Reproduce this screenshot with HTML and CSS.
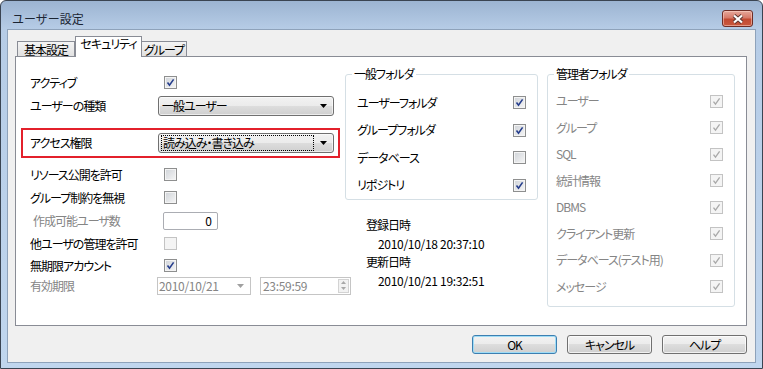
FILE: index.html
```html
<!DOCTYPE html>
<html lang="ja">
<head>
    <meta charset="UTF-8">
    <meta name="viewport" content="width=device-width, initial-scale=1.0">
    <title>ユーザー設定</title>
    <link rel="stylesheet" href="styles.css">
</head>
<body>
<div class="window">
    <div class="titlebar">
        <span class="title">ユーザー設定</span>
        <span class="close">
            <svg width="14" height="10" viewBox="0 0 14 10"><path class="x-shadow" d="M3 1.5 11 8.5M11 1.5 3 8.5"/><path class="x-mark" d="M3 1.5 11 8.5M11 1.5 3 8.5"/></svg>
        </span>
    </div>

    <div class="client">
        <div class="tabs">
            <div class="tab">基本設定</div>
            <div class="tab active">セキュリティ</div>
            <div class="tab last">グループ</div>
        </div>

        <div class="panel">
            <!-- left column: account options -->
            <div class="col-left">
                <div class="row">
                    <span class="label">アクティブ</span>
                    <span class="cb"><svg width="9" height="9" viewBox="0 0 9 9"><path d="M1.5 4.6 3.5 7.2 7.6 1.4"/></svg></span>
                </div>
                <div class="row">
                    <span class="label">ユーザーの種類</span>
                    <span class="combo"><span class="combo-text">一般ユーザー</span><svg width="7" height="4" viewBox="0 0 7 4"><path d="M0 0h7L3.5 4z"/></svg></span>
                </div>
                <div class="highlight">
                    <span class="label">アクセス権限</span>
                    <span class="combo"><span class="combo-text focus">読み込み・書き込み</span><svg width="7" height="4" viewBox="0 0 7 4"><path d="M0 0h7L3.5 4z"/></svg></span>
                </div>
                <div class="row first-after">
                    <span class="label">リソース公開を許可</span>
                    <span class="cb"></span>
                </div>
                <div class="row">
                    <span class="label">グループ制約を無視</span>
                    <span class="cb"></span>
                </div>
                <div class="row">
                    <span class="label sub disabled">作成可能ユーザ数</span>
                    <span class="textbox">0</span>
                </div>
                <div class="row">
                    <span class="label">他ユーザの管理を許可</span>
                    <span class="cb off"></span>
                </div>
                <div class="row short">
                    <span class="label">無期限アカウント</span>
                    <span class="cb"><svg width="9" height="9" viewBox="0 0 9 9"><path d="M1.5 4.6 3.5 7.2 7.6 1.4"/></svg></span>
                </div>
                <div class="row last-row">
                    <span class="label disabled">有効期限</span>
                    <span class="datebox">2010/10/21<svg width="7" height="4" viewBox="0 0 7 4"><path d="M0 0h7L3.5 4z"/></svg></span>
                    <span class="timebox">23:59:59
                        <span class="spin"><svg width="5" height="3" viewBox="0 0 5 3"><path d="M0 3h5L2.5 0z"/></svg><svg width="5" height="3" viewBox="0 0 5 3"><path d="M0 0h5L2.5 3z"/></svg></span>
                    </span>
                </div>
            </div>

            <!-- middle column: folders and dates -->
            <div class="col-mid">
                <div class="group general">
                    <span class="group-title">一般フォルダ</span>
                    <div class="item"><span>ユーザーフォルダ</span><span class="cb"><svg width="9" height="9" viewBox="0 0 9 9"><path d="M1.5 4.6 3.5 7.2 7.6 1.4"/></svg></span></div>
                    <div class="item"><span>グループフォルダ</span><span class="cb"><svg width="9" height="9" viewBox="0 0 9 9"><path d="M1.5 4.6 3.5 7.2 7.6 1.4"/></svg></span></div>
                    <div class="item"><span>データベース</span><span class="cb"></span></div>
                    <div class="item"><span>リポジトリ</span><span class="cb"><svg width="9" height="9" viewBox="0 0 9 9"><path d="M1.5 4.6 3.5 7.2 7.6 1.4"/></svg></span></div>
                </div>
                <div class="dates">
                    <div class="date-row">登録日時</div>
                    <div class="date-row value">2010/10/18 20:37:10</div>
                    <div class="date-row">更新日時</div>
                    <div class="date-row value">2010/10/21 19:32:51</div>
                </div>
            </div>

            <!-- right column: admin folders (disabled) -->
            <div class="col-right">
                <div class="group admin">
                    <span class="group-title">管理者フォルダ</span>
                    <div class="item disabled"><span>ユーザー</span><span class="cb off"><svg width="9" height="9" viewBox="0 0 9 9"><path d="M1.5 4.6 3.5 7.2 7.6 1.4"/></svg></span></div>
                    <div class="item disabled"><span>グループ</span><span class="cb off"><svg width="9" height="9" viewBox="0 0 9 9"><path d="M1.5 4.6 3.5 7.2 7.6 1.4"/></svg></span></div>
                    <div class="item disabled"><span>SQL</span><span class="cb off"><svg width="9" height="9" viewBox="0 0 9 9"><path d="M1.5 4.6 3.5 7.2 7.6 1.4"/></svg></span></div>
                    <div class="item disabled"><span>統計情報</span><span class="cb off"><svg width="9" height="9" viewBox="0 0 9 9"><path d="M1.5 4.6 3.5 7.2 7.6 1.4"/></svg></span></div>
                    <div class="item disabled"><span>DBMS</span><span class="cb off"><svg width="9" height="9" viewBox="0 0 9 9"><path d="M1.5 4.6 3.5 7.2 7.6 1.4"/></svg></span></div>
                    <div class="item disabled"><span>クライアント更新</span><span class="cb off"><svg width="9" height="9" viewBox="0 0 9 9"><path d="M1.5 4.6 3.5 7.2 7.6 1.4"/></svg></span></div>
                    <div class="item disabled"><span>データベース(テスト用)</span><span class="cb off"><svg width="9" height="9" viewBox="0 0 9 9"><path d="M1.5 4.6 3.5 7.2 7.6 1.4"/></svg></span></div>
                    <div class="item disabled"><span>メッセージ</span><span class="cb off"><svg width="9" height="9" viewBox="0 0 9 9"><path d="M1.5 4.6 3.5 7.2 7.6 1.4"/></svg></span></div>
                </div>
            </div>
        </div>

        <div class="buttons">
            <button type="button" class="btn default">OK</button>
            <button type="button" class="btn">キャンセル</button>
            <button type="button" class="btn">ヘルプ</button>
        </div>
    </div>
</div>
</body>
</html>
```

FILE: styles.css
```css
* {
    box-sizing: border-box;
    margin: 0;
    padding: 0;
}

body {
    font-family: "Noto Sans CJK JP", "Noto Sans", sans-serif;
    font-size: 12px;
    line-height: 14px;
    font-feature-settings: "palt";
    letter-spacing: -1px;
    color: #000;
    background: #fff;
    white-space: nowrap;
}

/* window frame */
.window {
    width: 763px;
    height: 369px;
    border: 1px solid #3a4452;
    border-radius: 6px 6px 0 0;
    background: linear-gradient(#9cb4d2 0, #b6cce6 28px, #c0d6ee 100%);
    padding: 0 6px 5px 6px;
    display: flex;
    flex-direction: column;
}

.titlebar {
    height: 28px;
    display: flex;
    justify-content: space-between;
    align-items: flex-start;
    padding: 0 3px 0 5px;
}

.title {
    margin-top: 11px;
    color: #1b2533;
    font-feature-settings: normal;
    letter-spacing: 0;
}

.close {
    margin-top: 9px;
    width: 31px;
    height: 17px;
    border: 1px solid #6e2d26;
    border-radius: 3px;
    background: linear-gradient(#e6a89b 0, #d77a69 45%, #c24a32 55%, #c9583d 100%);
    box-shadow: inset 0 0 0 1px rgba(255, 220, 210, 0.5);
    display: flex;
    justify-content: center;
    align-items: center;
}

.close .x-shadow {
    fill: none;
    stroke: #5b3530;
    stroke-width: 4;
}

.close .x-mark {
    fill: none;
    stroke: #fff;
    stroke-width: 2.2;
}

.client {
    flex: 1;
    border: 1px solid #8ea2ba;
    background: #f0f0f0;
    padding: 6px 8px 0 7px;
    display: flex;
    flex-direction: column;
}

/* tabs */
.tabs {
    height: 21px;
    margin-bottom: -1px;
    padding-left: 2px;
    display: flex;
    align-items: flex-end;
    position: relative;
    z-index: 1;
}

.tab {
    height: 15px;
    margin-bottom: 1px;
    border: 1px solid #898c95;
    border-bottom: none;
    background: linear-gradient(#f4f4f4, #e1e1e1);
    display: flex;
    justify-content: center;
    align-items: center;
    padding-top: 1px;
    width: 58px;
}

.tab.active {
    height: 21px;
    margin-bottom: 0;
    width: 67px;
    background: #fff;
    padding-top: 0;
    padding-bottom: 6px;
    position: relative;
    z-index: 2;
}

.tab.last {
    width: 46px;
    margin-left: -1px;
}

.panel {
    height: 270px;
    border: 1px solid #898c95;
    background: #fff;
    display: flex;
}

/* left column */
.col-left {
    margin-left: 5px;
    width: 319px;
    padding-top: 14px;
    flex-shrink: 0;
}

.row {
    height: 23px;
    padding-left: 9px;
    display: flex;
    align-items: center;
}

.row.first-after {
    margin-top: 5px;
}

.row.short {
    height: 21px;
}

.row.last-row {
    height: 19px;
}

.label {
    width: 127px;
    flex-shrink: 0;
}

.label.sub {
    padding-left: 3px;
}

.disabled {
    color: #858585;
}

.highlight {
    margin-top: 11px;
    height: 30px;
    border: 2px solid #e3202b;
    padding-left: 7px;
    display: flex;
    align-items: center;
}

/* checkbox */
.cb {
    width: 13px;
    height: 13px;
    margin-left: 7px;
    border: 1px solid #8e8f8f;
    background: linear-gradient(135deg, #cfd3d8, #f6f6f6);
    box-shadow: inset 0 0 0 1px #f4f4f4;
    display: flex;
    justify-content: center;
    align-items: center;
    flex-shrink: 0;
}

.cb path {
    fill: none;
    stroke: #253d8c;
    stroke-width: 1.6;
}

.cb.off {
    border-color: #c3c3c3;
    background: #f4f4f4;
    box-shadow: none;
}

.cb.off path {
    stroke: #a9a9a9;
    stroke-width: 1.3;
}

/* combobox */
.combo {
    width: 176px;
    height: 20px;
    margin-left: 1px;
    border: 1px solid #707070;
    border-radius: 3px;
    background: linear-gradient(#f2f2f2 0, #ebebeb 50%, #dddddd 50%, #cfcfcf 100%);
    box-shadow: inset 0 0 0 1px rgba(255, 255, 255, 0.6);
    display: flex;
    align-items: center;
    justify-content: space-between;
    padding: 0 6px 0 2px;
    flex-shrink: 0;
}

.combo-text {
    height: 16px;
    padding-left: 1px;
    display: flex;
    align-items: center;
}

.combo-text.focus {
    width: 153px;
    border: 1px dotted #000;
}

.combo svg path {
    fill: #000;
}

.textbox {
    width: 55px;
    height: 18px;
    margin-left: 6px;
    border: 1px solid #abadb3;
    border-radius: 2px;
    background: #fff;
    text-align: right;
    padding: 1px 5px 0 0;
    letter-spacing: 0;
}

.datebox,
.timebox {
    height: 18px;
    border: 1px solid #c5c5c5;
    background: #fff;
    color: #858585;
    display: flex;
    align-items: center;
    justify-content: space-between;
    flex-shrink: 0;
    letter-spacing: -0.3px;
}

.datebox {
    width: 94px;
    padding: 0 6px 0 1px;
}

.datebox svg path {
    fill: #a0a0a0;
}

.timebox {
    width: 91px;
    margin-left: 9px;
    padding: 0 1px 0 2px;
}

.spin {
    width: 11px;
    height: 14px;
    border: 1px solid #d3d3d3;
    background: #f2f2f2;
    display: flex;
    flex-direction: column;
    justify-content: space-around;
    align-items: center;
}

.spin svg path {
    fill: #a8a8a8;
}

/* group boxes */
.col-mid {
    margin-left: 5px;
    width: 193px;
    padding-top: 17px;
    flex-shrink: 0;
}

.col-right {
    margin-left: 9px;
    width: 188px;
    padding-top: 17px;
    flex-shrink: 0;
}

.group {
    border: 1px solid #d5dfe5;
    border-radius: 3px;
    position: relative;
}

.group.general {
    padding: 14px 11px 0 11px;
}

.group.admin {
    padding: 13px 11px 6px 8px;
}

.group-title {
    position: absolute;
    top: -8px;
    left: 6px;
    padding: 0 2px;
    background: #fff;
}

.item {
    display: flex;
    justify-content: space-between;
    align-items: center;
}

.general .item {
    height: 27.5px;
}

.admin .item {
    height: 26.5px;
}

.item .cb {
    margin-left: 0;
}

.dates {
    margin-top: 16px;
    padding-left: 21px;
}

.date-row {
    height: 18.5px;
    display: flex;
    align-items: center;
}

.date-row.value {
    padding-left: 12px;
    letter-spacing: -0.3px;
}

/* dialog buttons */
.buttons {
    margin-top: 9px;
    display: flex;
    justify-content: flex-end;
    gap: 10px;
}

.btn {
    width: 85px;
    height: 19px;
    font: inherit;
    font-feature-settings: "palt";
    letter-spacing: -1px;
    color: #000;
    border: 1px solid #707070;
    border-radius: 3px;
    background: linear-gradient(#f2f2f2 0, #ebebeb 50%, #dddddd 50%, #cfcfcf 100%);
    box-shadow: inset 0 0 0 1px rgba(255, 255, 255, 0.7);
}

.btn.default {
    border-color: #3c7fb1;
    box-shadow: inset 0 0 0 1px #9fdcf6;
}
```
